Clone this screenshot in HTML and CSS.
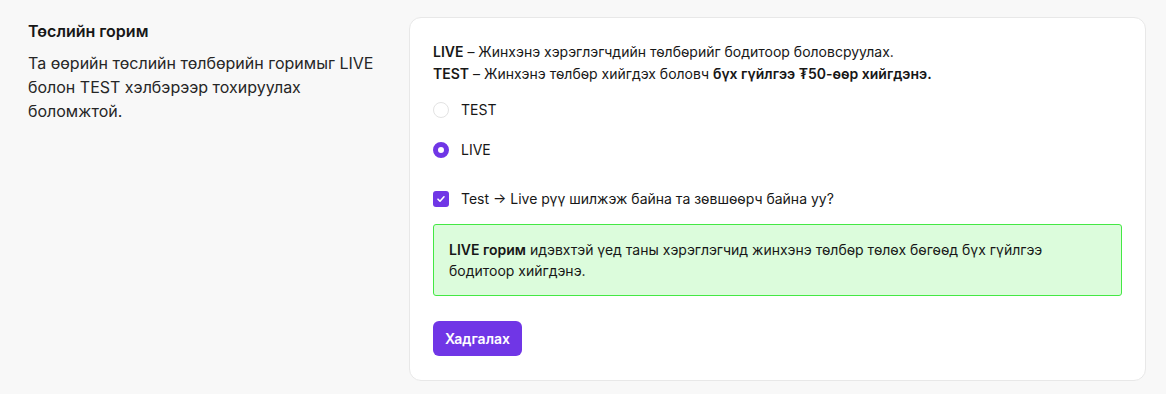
FILE: index.html
```html
<!DOCTYPE html>
<html lang="mn">
<head>
    <meta charset="UTF-8">
    <meta name="viewport" content="width=device-width, initial-scale=1.0">
    <title>Төслийн горим</title>
    <link rel="stylesheet" href="styles.css">
</head>
<body>
    <div class="settings">
        <div class="intro">
            <h2>Төслийн горим</h2>
            <p>Та өөрийн төслийн төлбөрийн горимыг LIVE болон TEST хэлбэрээр тохируулах боломжтой.</p>
        </div>
        <div class="card">
            <div class="modes-info">
                <p><b>LIVE</b> – Жинхэнэ хэрэглэгчдийн төлбөрийг бодитоор боловсруулах.</p>
                <p><b>TEST</b> – Жинхэнэ төлбөр хийгдэх боловч <b>бүх гүйлгээ ₮50-өөр хийгдэнэ.</b></p>
            </div>
            <div class="options">
                <label class="option">
                    <span class="radio"></span>
                    <span>TEST</span>
                </label>
                <label class="option">
                    <span class="radio checked"></span>
                    <span>LIVE</span>
                </label>
            </div>
            <label class="confirm">
                <span class="checkbox">
                    <svg width="10" height="10" viewBox="0 0 10 10"><path d="M2 5.2l2 2 4-4.4" fill="none" stroke="#fff" stroke-width="1.6" stroke-linecap="round" stroke-linejoin="round"/></svg>
                </span>
                <span>Test → Live рүү шилжэж байна та зөвшөөрч байна уу?</span>
            </label>
            <div class="notice">
                <b>LIVE горим</b> идэвхтэй үед таны хэрэглэгчид жинхэнэ төлбөр төлөх бөгөөд бүх гүйлгээ бодитоор хийгдэнэ.
            </div>
            <button class="save">Хадгалах</button>
        </div>
    </div>
</body>
</html>
```

FILE: styles.css
```css
body {
    margin: 0;
    background: #f8f8f8;
    font-family: Inter, "Noto Sans", sans-serif;
    color: #171717;
}
.settings {
    display: grid;
    grid-template-columns: 353px 1fr;
    gap: 28px;
    padding: 17px 20px 12px 28px;
}
.intro h2 {
    margin: 2px 0 8px;
    font-size: 16px;
    line-height: 24px;
    font-weight: 600;
}
.intro p {
    margin: 0;
    font-size: 16px;
    line-height: 24px;
    color: #262626;
}
.card {
    background: #fff;
    border: 1px solid #e8e8e8;
    border-radius: 12px;
    padding: 23px 23px 24px;
    font-size: 14px;
}
.modes-info p {
    margin: 0;
    line-height: 22px;
}
.modes-info b {
    font-weight: 600;
}
.options {
    display: flex;
    flex-direction: column;
    gap: 16px;
    margin-top: 13px;
}
.option,
.confirm {
    display: flex;
    align-items: center;
    gap: 12px;
    line-height: 24px;
}
.radio {
    width: 16px;
    height: 16px;
    box-sizing: border-box;
    border-radius: 50%;
    border: 1px solid #e3e3e3;
    background: #fff;
}
.radio.checked {
    border: 5px solid #7036e6;
}
.confirm {
    margin-top: 25px;
}
.checkbox {
    width: 16px;
    height: 16px;
    border-radius: 3px;
    background: #7036e6;
    display: flex;
    align-items: center;
    justify-content: center;
}
.notice {
    margin-top: 13px;
    padding: 14px 15px;
    background: #dcfcdc;
    border: 1px solid #44e844;
    border-radius: 3px;
    line-height: 21px;
}
.notice b {
    font-weight: 600;
}
.save {
    margin-top: 25px;
    padding: 8px 12px;
    border: none;
    border-radius: 6px;
    background: #7036e6;
    color: #fff;
    font-family: inherit;
    font-size: 14px;
    font-weight: 600;
    line-height: 19px;
}
```
